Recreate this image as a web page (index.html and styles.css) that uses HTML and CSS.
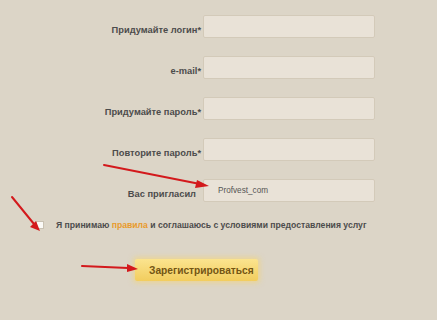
FILE: index.html
```html
<!DOCTYPE html>
<html lang="ru">
<head>
    <meta charset="UTF-8">
    <title>Регистрация</title>
    <link rel="stylesheet" href="styles.css">
</head>
<body>
    <div class="page">
        <form class="reg-form">
            <div class="row">
                <label class="label" for="login">Придумайте логин<span class="req">*</span></label>
                <input class="field" type="text" id="login">
            </div>
            <div class="row">
                <label class="label" for="email">e-mail<span class="req">*</span></label>
                <input class="field" type="email" id="email">
            </div>
            <div class="row">
                <label class="label" for="pass">Придумайте пароль<span class="req">*</span></label>
                <input class="field" type="password" id="pass">
            </div>
            <div class="row">
                <label class="label" for="pass2">Повторите пароль<span class="req">*</span></label>
                <input class="field" type="password" id="pass2">
            </div>
            <div class="row">
                <label class="label label-plain" for="ref">Вас пригласил</label>
                <input class="field" type="text" id="ref" value="Profvest_com">
            </div>

            <div class="agree">
                <span class="check"></span>
                <span class="agree-text">Я принимаю <a class="rules" href="#">правила</a> и соглашаюсь с условиями предоставления услуг</span>
            </div>

            <div class="submit-row">
                <button class="btn" type="button">Зарегистрироваться</button>
            </div>
        </form>

        <!-- стрелки-пометки поверх формы -->
        <svg class="marks" width="437" height="320" viewBox="0 0 437 320">
            <g stroke="#d3191c" stroke-width="2" fill="none" stroke-linecap="round">
                <line x1="104" y1="165" x2="200" y2="184"/>
                <line x1="12" y1="197" x2="34" y2="224"/>
                <line x1="82" y1="266" x2="128" y2="268"/>
            </g>
            <g fill="#d3191c">
                <polygon points="209,186 197,180 195,188"/>
                <polygon points="40,231 30,227 36,221"/>
                <polygon points="138,269 127,264 127,272"/>
            </g>
        </svg>
    </div>
</body>
</html>
```

FILE: styles.css
```css
body {
    margin: 0;
    background: #dcd5c7;
    font-family: "Liberation Sans", Arial, sans-serif;
    color: #4c4c4c;
}
.page {
    position: relative;
    width: 437px;
    height: 320px;
    overflow: hidden;
}
.reg-form {
    padding-top: 15px;
}
.row {
    display: grid;
    grid-template-columns: 201px 172px;
    column-gap: 2px;
    align-items: center;
    height: 23px;
    margin-bottom: 18px;
}
.label {
    text-align: right;
    font-size: 9.3px;
    font-weight: bold;
    padding-top: 6px;
}
.label-plain {
    padding-right: 5px;
}
.req {
    color: #4c4c4c;
}
.field {
    box-sizing: border-box;
    width: 172px;
    height: 23px;
    margin: 0;
    padding: 0 14px;
    background: #e9e2d7;
    border: 1px solid #d3cab9;
    border-radius: 2px;
    font-family: "Liberation Sans", Arial, sans-serif;
    font-size: 8.2px;
    color: #555;
    outline: none;
}
.agree {
    display: flex;
    align-items: center;
    margin-top: -2px;
    padding-left: 36px;
    height: 14px;
}
.check {
    width: 6px;
    height: 6px;
    background: #fbfaf7;
    border: 1px solid #c9c1b2;
    margin-right: 12px;
}
.agree-text {
    font-size: 8.65px;
    font-weight: bold;
}
.rules {
    color: #e89a2c;
    text-decoration: none;
}
.submit-row {
    padding-left: 135px;
    margin-top: 27px;
}
.btn {
    width: 123px;
    height: 22px;
    padding: 0 0 0 14px;
    text-align: left;
    border: none;
    border-radius: 2px;
    background: linear-gradient(#fbe48f, #f2cd5e);
    box-shadow: 0 0 5px 2px rgba(246, 214, 110, 0.55);
    font-family: "Liberation Sans", Arial, sans-serif;
    font-size: 10.2px;
    font-weight: bold;
    color: #735514;
    cursor: pointer;
}
.marks {
    position: absolute;
    left: 0;
    top: 0;
    pointer-events: none;
}
```
